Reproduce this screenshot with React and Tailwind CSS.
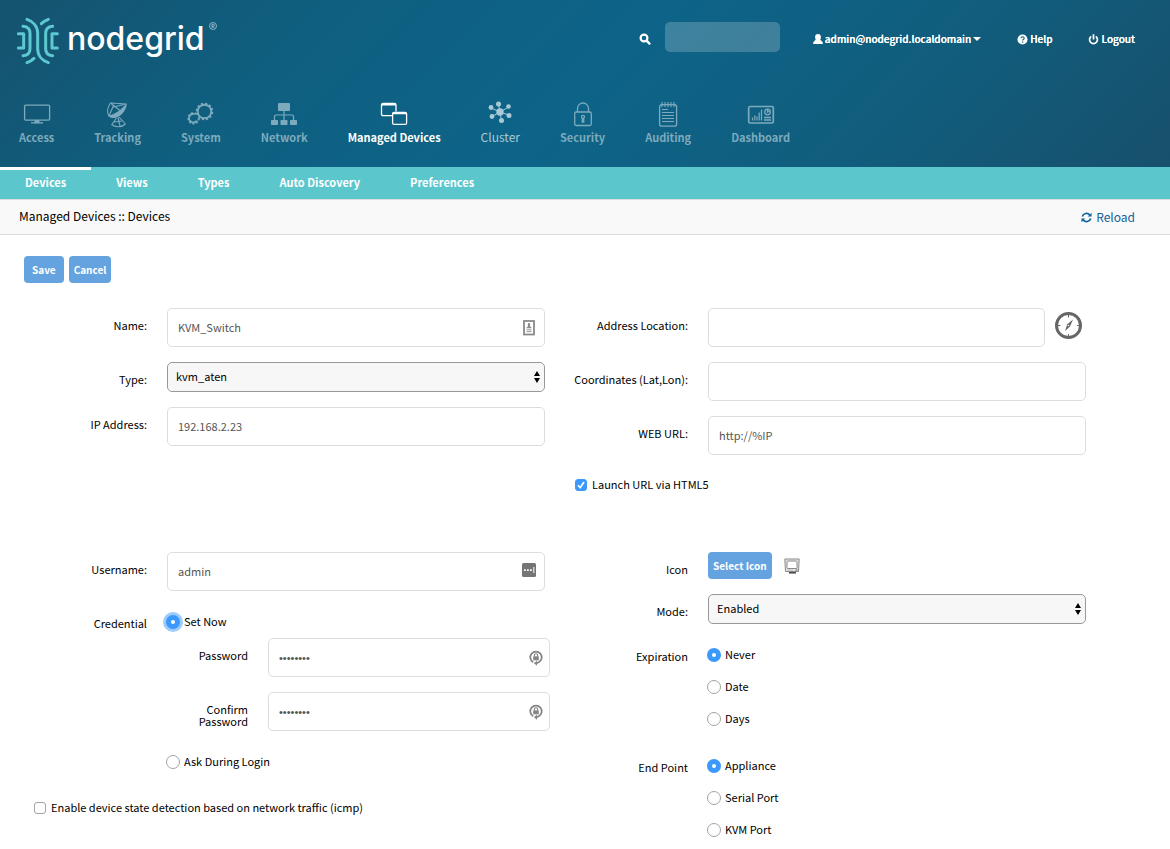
import React from "react";

const FONT = "font-['Noto_Sans_CJK_SC',sans-serif]";

function Logo() {
  return (
    <a href="#home" aria-label="nodegrid" className="flex items-start text-white">
      <svg viewBox="0 0 144 162" className="h-[54px] w-12" fill="none" stroke="#5ec8d0" strokeWidth="9" strokeLinecap="round" strokeLinejoin="round">
        <path d="M13 59H29V102H13" />
        <path d="M130 59H114V102H130" />
        <path d="M27 37C39 38 48 45 48 58V104C48 117 39 124 27 125" />
        <path d="M116 37C104 38 95 45 95 58V104C95 117 104 124 116 125" />
        <path d="M39 16C58 22 71 38 71 58V104C71 124 84 140 103 146" />
        <path d="M103 16C95 19 88 23 82 29" />
        <path d="M39 146C47 143 54 139 60 133" />
      </svg>
      <span className="mt-[5px] ml-[5px] font-['Inter',sans-serif] text-[32px] leading-10 font-medium">nodegrid</span>
      <svg viewBox="0 0 8 8" className="mt-2 ml-1 size-2" fill="none" stroke="#a9c9d6" strokeWidth="0.8">
        <circle cx="4" cy="4" r="3.5" />
        <path d="M3 6V2.3H4.4A1 1 0 0 1 4.4 4.3H3M4.3 4.3L5.2 6" />
      </svg>
    </a>
  );
}

const S = { viewBox: "0 0 32 28", className: "h-7 w-8", fill: "none", stroke: "currentColor", strokeWidth: 1.3 };

function Gear({ cx, cy, r, teeth, open }) {
  const marks = [];
  for (let i = 0; i < teeth; i++) {
    const a = (i / teeth) * Math.PI * 2 + 0.2;
    if (open && a > 5.3) continue;
    marks.push(
      <line key={i} x1={cx + Math.cos(a) * r} y1={cy + Math.sin(a) * r} x2={cx + Math.cos(a) * (r + 2)} y2={cy + Math.sin(a) * (r + 2)} strokeWidth="2.2" />
    );
  }
  return (
    <g>
      {open ? <path d={`M${cx + 1} ${cy - r}A${r} ${r} 0 1 0 ${cx + r - 1} ${cy + r - 2}`} strokeWidth="1.7" /> : <circle cx={cx} cy={cy} r={r} strokeWidth="1.9" />}
      {marks}
    </g>
  );
}

const ICONS = {
  Access: (
    <svg {...S}>
      <rect x="3.6" y="5.1" width="25" height="15" rx="1" />
      <path d="M14 20h4l.6 2.3h3.4v1.2H10v-1.2h3.4z" fill="currentColor" stroke="none" />
    </svg>
  ),
  Tracking: (
    <svg {...S} strokeWidth="1.1">
      <path d="M8.500 3C5 8 5 13 7 16.500" />
      <path d="M6.500 15.500C13 14.500 20 9 24.500 3.500C25.500 8 20 16 14 17.800C11 18.500 7.500 18 6.500 15.500Z" fill="currentColor" stroke="none" />
      <path d="M8.500 3L24.500 4M8.500 3L18 10.500M11 7L24.500 4M7 16L11.500 5.500M14.500 18L9.500 25M17 17L23.500 24M16 17.500L18 26M9.500 24.500C13 27.500 20 27.500 23.500 24M12 22L20 21" />
    </svg>
  ),
  System: (
    <svg {...S}>
      <Gear cx={19.5} cy={11.5} r={6.8} teeth={12} />
      <Gear cx={8.6} cy={18.3} r={4.2} teeth={9} open />
    </svg>
  ),
  Network: (
    <svg {...S} fill="currentColor" stroke="none">
      <rect x="10" y="3" width="12" height="8" rx="1" />
      <rect x="3" y="20" width="7" height="5" rx=".7" />
      <rect x="12.500" y="20" width="7" height="5" rx=".7" />
      <rect x="22" y="20" width="7" height="5" rx=".7" />
      <path d="M16 11v9M6.500 20v-3.500q0-1.500 1.500-1.500h16q1.500 0 1.500 1.500V20" fill="none" stroke="currentColor" strokeWidth="1.200" />
    </svg>
  ),
  "Managed Devices": (
    <svg {...S}>
      <path d="M14 15.600H5q-1.500 0-1.500-1.500V5q0-1.500 1.500-1.500h11.500q1.500 0 1.500 1.500v6.500" />
      <path d="M4 4.600h14M15 13.400h13" strokeWidth="1.700" />
      <rect x="14.600" y="12.400" width="14" height="12" rx="1.500" />
    </svg>
  ),
  Cluster: (
    <svg {...S} fill="currentColor" strokeWidth="1">
      <path d="M16 12L14.500 4M16 12L25.500 6.500M16 12L26 15.500M16 12L17.500 21M16 12L8 16.500M16 12L7 8" />
      <g stroke="none">
        <circle cx="16" cy="12" r="3.700" />
        <circle cx="14.500" cy="4" r="2.500" />
        <circle cx="24.500" cy="6.500" r="2.300" />
        <circle cx="25" cy="15.500" r="2.500" />
        <circle cx="17.500" cy="20.500" r="2.500" />
        <circle cx="8" cy="16.500" r="2.400" />
        <circle cx="7" cy="7.500" r="2.400" />
      </g>
    </svg>
  ),
  Security: (
    <svg {...S}>
      <rect x="7.700" y="12" width="16.600" height="13.500" rx="1.500" />
      <path d="M10.500 12V8.500a5.500 5.500 0 0 1 11 0V12" />
      <circle cx="16" cy="16.800" r="1.500" />
      <path d="M15.300 18v4h1.400v-4" />
    </svg>
  ),
  Auditing: (
    <svg {...S}>
      <rect x="7.600" y="4.600" width="17" height="21.500" rx="2.200" />
      <path d="M10 2v5M13 2v5M16 2v5M19 2v5M22 2v5" strokeWidth="1.100" />
      <path d="M10 9.500h6M10 12.500h12M10 15.500h12M10 18.500h12M10 21.500h12" strokeWidth="1.200" />
    </svg>
  ),
  Dashboard: (
    <svg {...S}>
      <rect x="3.700" y="6.500" width="24.600" height="16.500" rx="1.500" strokeWidth="1.700" />
      <path d="M7.500 20.500v-3M9.800 20.500v-5M12 20.500v-4M14.200 20.500v-8M16.500 20.500v-11" strokeWidth="1.200" />
      <circle cx="22.500" cy="12" r="2.800" />
      <path d="M22.500 9v3l2.500-1.500M19 17.500h7M19 20h7" />
    </svg>
  ),
};

function SearchIcon() {
  return (
    <svg viewBox="0 0 12 12" className="size-3" fill="none" stroke="currentColor" strokeLinecap="round">
      <circle cx="5" cy="5" r="3.400" strokeWidth="2.200" />
      <path d="M8 8L10.400 10.600" strokeWidth="2.400" />
    </svg>
  );
}

function UserIcon() {
  return (
    <svg viewBox="0 0 10 12" className="h-3 w-[10px]" fill="currentColor">
      <path d="M5 1C3 1 2.100 2.200 2.100 4C2.100 5.300 2.500 6.200 2.700 6.800C2.600 7.600 .2 8 .2 9.800V11H9.800V9.800C9.800 8 7.400 7.600 7.300 6.800C7.500 6.200 7.900 5.300 7.900 4C7.900 2.200 7 1 5 1Z" />
    </svg>
  );
}

function HelpIcon() {
  return (
    <svg viewBox="0 0 12 12" className="size-[11px]">
      <circle cx="6" cy="6" r="5.500" fill="#fff" />
      <path d="M4.300 4.600Q4.400 3 6.100 3Q7.800 3 7.800 4.500Q7.800 5.400 6.800 5.900Q6.100 6.300 6.100 7.100M6.100 8.100V9.500" fill="none" stroke="#135f80" strokeWidth="1.300" />
    </svg>
  );
}

function PowerIcon() {
  return (
    <svg viewBox="0 0 12 12" className="size-[11px]" fill="none" stroke="currentColor" strokeWidth="1.900">
      <path d="M3.500 2.600A4.300 4.300 0 1 0 8.500 2.600M6 .3V6" />
    </svg>
  );
}

function ReloadIcon() {
  return (
    <svg viewBox="0 0 12 12" className="size-[11px]" fill="none" stroke="currentColor" strokeWidth="1.900">
      <path d="M1.500 5A4.600 4.600 0 0 1 9.600 3.300M10.500 7A4.600 4.600 0 0 1 2.400 8.700" />
      <path d="M11.500 .8V5H7.300ZM.5 11.200V7H4.700Z" fill="currentColor" stroke="none" />
    </svg>
  );
}

function CompassIcon() {
  return (
    <svg viewBox="0 0 28 28" className="size-7" fill="none" stroke="#666">
      <circle cx="13.500" cy="13.500" r="12" strokeWidth="3" />
      <path d="M13.500 3V5.500M13.500 22V24.500M3 13.500H5.500M22 13.500H24.500" strokeWidth="1" />
      <path d="M18 7.500L15 14.500L10 19L12.300 12.200Z" fill="#666" stroke="none" />
      <circle cx="13.500" cy="13.500" r=".8" fill="#fff" stroke="none" />
    </svg>
  );
}

function ContactBadge() {
  return (
    <svg viewBox="0 0 12 16" className="h-4 w-3" fill="none" stroke="#8a8a8a">
      <rect x="1" y="1" width="10" height="13.500" strokeWidth="1.800" />
      <path d="M6 3C7.600 3 7.400 5.300 6.800 6C7 6.800 8.700 6.800 8.700 8.300H3.300C3.300 6.800 5 6.800 5.200 6C4.600 5.300 4.400 3 6 3Z" fill="#8a8a8a" stroke="none" />
      <path d="M3.500 9.800H8.500M3.500 11.600H8.500" strokeWidth=".9" />
    </svg>
  );
}

function DotsBadge() {
  return (
    <svg viewBox="0 0 14 18" className="h-[18px] w-[14px]">
      <rect width="14" height="14" rx="1.500" fill="#757575" />
      <path d="M2 6.200h1.800v1.800H2zM5 6.200h1.800v1.800H5zM8 6.200h1.800v1.800H8zM11.300 4h1v6h-1z" fill="#fff" />
    </svg>
  );
}

function LockBadge() {
  return (
    <svg viewBox="0 0 14 16" className="h-4 w-[14px]" fill="none" stroke="#858585">
      <path d="M4.200 12.200A5.700 5.700 0 1 1 9.800 12.200Q8.500 13.200 7 13.200" strokeWidth="1.700" />
      <path d="M8 10.600V15.800L5 13.200Z" fill="#858585" stroke="none" />
      <rect x="4.200" y="6.300" width="5.600" height="4" fill="#858585" stroke="none" />
      <path d="M5.400 6.500V5.300a1.600 1.600 0 0 1 3.200 0V6.500" strokeWidth="1.100" />
    </svg>
  );
}

function MonitorIcon() {
  return (
    <svg viewBox="0 0 16 16" className="size-4" fill="none">
      <path d="M.8 1H15.200L14.500 13.500H1.500Z" fill="#e6e6e6" stroke="#8a8a8a" />
      <rect x="3" y="3" width="10" height="7.500" rx=".8" fill="#fff" stroke="#8a8a8a" />
      <path d="M3 12H9" stroke="#bbb" />
      <path d="M5 14.800H12" stroke="#444" strokeWidth="1.500" />
      <path d="M11.500 12h2" stroke="#555" />
    </svg>
  );
}

function Row({ label, htmlFor, labelWidth = "w-[143px]", children }) {
  const Tag = htmlFor ? "label" : "span";
  return (
    <div className="flex gap-5">
      <Tag htmlFor={htmlFor} className={`${labelWidth} shrink-0 pt-[11px] text-right leading-3`}>{label}</Tag>
      <div className="min-w-0 flex-1">{children}</div>
    </div>
  );
}

function TextBox({ id, type = "text", value = "", badge }) {
  const secret = type === "password";
  return (
    <div className="relative w-full">
      <input
        id={id}
        type={type}
        defaultValue={value}
        className={`block h-[39px] w-full rounded-[5px] border border-[#ddd] bg-white px-[10px] text-[#555] outline-none ${secret ? "font-['Liberation_Sans',sans-serif]" : "pb-0.5"}`}
      />
      {badge && <span className={`pointer-events-none absolute inset-y-0 flex w-[14px] items-center justify-center ${secret ? "right-[7px]" : "right-[9px]"}`}>{badge}</span>}
    </div>
  );
}

function Select({ id, options }) {
  return (
    <div className="relative">
      <select id={id} className="block h-[30px] w-full appearance-none rounded-[5px] border border-[#999] bg-[#f7f7f7] px-2 pb-0.5 outline-none">
        {options.map((o) => <option key={o}>{o}</option>)}
      </select>
      <svg viewBox="0 0 6 12" className="pointer-events-none absolute top-[9px] right-[5px] h-3 w-[6px]">
        <path d="M3 0L6 5H0ZM3 12L0 7H6Z" />
      </svg>
    </div>
  );
}

function Radio({ name, label, checked, focused }) {
  return (
    <label className="-ml-px flex h-8 w-fit items-center gap-1">
      <input type="radio" name={name} defaultChecked={checked} className={`size-[14px] appearance-none rounded-full border border-[#a3a3a3] bg-white checked:border-[5px] checked:border-[#3b99fc] ${focused ? "ring-[3px] ring-[#9dcbfc]" : ""}`} />
      <span className="pb-0.5">{label}</span>
    </label>
  );
}

function CheckBox({ label, checked }) {
  return (
    <label className="ml-[30px] flex h-[30px] w-fit items-center gap-[5px]">
      <span className="relative flex">
        <input type="checkbox" defaultChecked={checked} className="peer size-3 appearance-none rounded-[3px] border border-[#a3a3a3] bg-white checked:border-[#3b99fc] checked:bg-[#3b99fc]" />
        <svg viewBox="0 0 12 12" className="pointer-events-none absolute inset-0 hidden size-3 peer-checked:block" fill="none" stroke="#fff" strokeWidth="1.700">
          <path d="M3 6.300L5.200 8.700L9 3" />
        </svg>
      </span>
      <span className="pb-0.5">{label}</span>
    </label>
  );
}

function Button({ children, wide }) {
  return (
    <button type="button" className={`h-[27px] rounded-[4px] bg-[#64a3e0] text-[10px] font-bold text-white ${wide ? "px-2" : "px-[5px]"}`}>{children}</button>
  );
}

export default function App() {
  return (
    <div className={`min-h-screen bg-white text-[11px] leading-4 text-black ${FONT}`}>
      <header className="bg-[linear-gradient(135deg,#15536f_0%,#0f5f80_25%,#0d6488_50%,#115d7d_75%,#17506c_100%)]">
        <div className="flex h-[90px] items-start justify-between pt-[14px] pr-[35px] pl-[14px]">
          <Logo />
          <div className="mt-2 flex h-[30px] items-center text-[10px] font-medium text-white [text-shadow:0_0_0_currentColor]">
            <label htmlFor="search" aria-label="Search" className="mr-[14px] pt-1"><SearchIcon /></label>
            <input id="search" className="mr-[33px] h-[30px] w-[115px] rounded-[5px] bg-white/20 px-2 outline-none" />
            <a href="#account" className="mr-9 flex items-center gap-0.5 pt-1">
              <UserIcon />admin@nodegrid.localdomain
              <svg viewBox="0 0 8 4" className="h-1 w-2" fill="currentColor"><path d="M0 0H8L4 4Z" /></svg>
            </a>
            <a href="#help" className="mr-9 flex items-center gap-0.5 pt-1"><HelpIcon />Help</a>
            <a href="#logout" className="flex items-center gap-0.5 pt-1"><PowerIcon />Logout</a>
          </div>
        </div>
        <nav className="flex h-[77px] gap-10 pt-[10px] pl-[19px] text-[11px] font-bold">
          {Object.keys(ICONS).map((name) => (
            <a key={name} href={`#${name}`} className={`flex flex-col items-center ${name === "Managed Devices" ? "text-white" : name === "Cluster" ? "text-[12px] font-normal text-[#a9c9d6]" : "text-[#7daabd]"}`}>
              {ICONS[name]}
              <span className="leading-[18px]">{name}</span>
            </a>
          ))}
        </nav>
      </header>

      <nav className="flex h-8 bg-[#5cc6cd] text-[11px] font-bold text-white">
        {["Devices", "Views", "Types", "Auto Discovery", "Preferences"].map((t, i) => (
          <a key={t} href={`#${t}`} className={`border-t-[3px] px-[25px] pt-1 ${i === 0 ? "border-white" : "border-transparent"}`}>{t}</a>
        ))}
      </nav>

      <div className="flex h-9 items-center justify-between border-y border-[#ddd] bg-[#f9f9f9] pr-[35px] pl-[19px]">
        <h1 className="pb-0.5 text-[12px]">Managed Devices :: Devices</h1>
        <a href="#reload" className="flex items-center gap-1 text-[12px] text-[#0f639a]"><ReloadIcon />Reload</a>
      </div>

      <form className="pt-[21px] pr-[84px] pl-1">
        <div className="flex gap-[5px] pl-5">
          <Button wide>Save</Button>
          <Button>Cancel</Button>
        </div>

        <div className="mt-[25px] grid grid-cols-2">
          <div className="flex flex-col gap-[15px]">
            <Row label="Name:" htmlFor="name"><TextBox id="name" value="KVM_Switch" badge={<ContactBadge />} /></Row>
            <Row label="Type:" htmlFor="type"><Select id="type" options={["kvm_aten"]} /></Row>
            <Row label="IP Address:" htmlFor="ip"><TextBox id="ip" value="192.168.2.23" /></Row>
          </div>
          <div className="flex flex-col gap-[15px]">
            <Row label="Address Location:" htmlFor="address">
              <div className="flex items-start gap-[10px]">
                <TextBox id="address" />
                <button type="button" aria-label="Locate" className="mt-1 mr-[3px] shrink-0"><CompassIcon /></button>
              </div>
            </Row>
            <Row label="Coordinates (Lat,Lon):" htmlFor="coords"><TextBox id="coords" /></Row>
            <Row label="WEB URL:" htmlFor="url"><TextBox id="url" value="http://%IP" /></Row>
            <CheckBox label="Launch URL via HTML5" checked />
          </div>
        </div>

        <div className="mt-[52px] grid grid-cols-2">
          <div className="flex flex-col gap-[15px]">
            <Row label="Username:" htmlFor="username"><TextBox id="username" value="admin" badge={<DotsBadge />} /></Row>
            <Row label="Credential">
              <Radio name="credential" label="Set Now" checked focused />
              <div className="-mr-[5px] mb-[15px] flex flex-col gap-[15px]">
                <Row label="Password" htmlFor="password" labelWidth="w-[81px]"><TextBox id="password" type="password" value="password" badge={<LockBadge />} /></Row>
                <Row label="Confirm Password" htmlFor="confirm" labelWidth="w-[81px]"><TextBox id="confirm" type="password" value="password" badge={<LockBadge />} /></Row>
              </div>
              <Radio name="credential" label="Ask During Login" />
            </Row>
            <CheckBox label="Enable device state detection based on network traffic (icmp)" />
          </div>
          <div className="flex flex-col gap-[15px]">
            <Row label="Icon">
              <div className="flex items-center gap-3"><Button>Select Icon</Button><MonitorIcon /></div>
            </Row>
            <Row label="Mode:" htmlFor="mode"><Select id="mode" options={["Enabled", "Disabled"]} /></Row>
            <Row label="Expiration">
              <Radio name="expiration" label="Never" checked />
              <Radio name="expiration" label="Date" />
              <Radio name="expiration" label="Days" />
            </Row>
            <Row label="End Point">
              <Radio name="endpoint" label="Appliance" checked />
              <Radio name="endpoint" label="Serial Port" />
              <Radio name="endpoint" label="KVM Port" />
            </Row>
          </div>
        </div>
      </form>
    </div>
  );
}
